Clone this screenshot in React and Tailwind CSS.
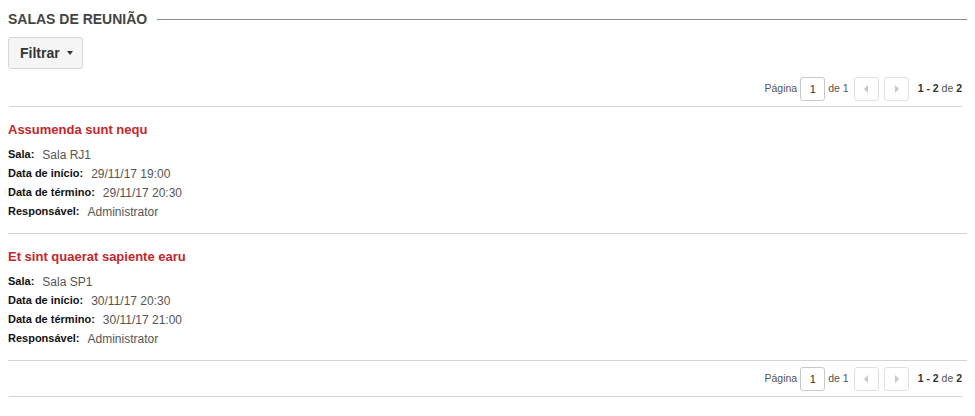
const meetings = [
  {
    id: 1,
    title: 'Assumenda sunt nequ',
    room: 'Sala RJ1',
    start: '29/11/17 19:00',
    end: '29/11/17 20:30',
    owner: 'Administrator',
  },
  {
    id: 2,
    title: 'Et sint quaerat sapiente earu',
    room: 'Sala SP1',
    start: '30/11/17 20:30',
    end: '30/11/17 21:00',
    owner: 'Administrator',
  },
];

function Caret({ dir }) {
  return (
    <svg width="5" height="8" viewBox="0 0 5 8" className="text-[#c8c8c8]">
      {dir === 'left' ? (
        <path d="M4 0 L0 4 L4 8 Z" fill="currentColor" />
      ) : (
        <path d="M1 0 L5 4 L1 8 Z" fill="currentColor" />
      )}
    </svg>
  );
}

function Pagination({ className }) {
  return (
    <div className={`ml-px mr-[5px] flex justify-end items-center border-b border-[#d4d4d4] text-[10.5px] text-[#555] ${className}`}>
      <span>Página</span>
      <div className="ml-[3px] w-[25px] h-[24px] border border-[#c8c8c8] rounded-[3px] flex items-center justify-center text-[11px] text-[#333]">
        1
      </div>
      <span className="ml-[3px]">de 1</span>
      <div className="ml-[5px] w-[25px] h-[24px] border border-[#e0e0e0] rounded-[3px] flex items-center justify-center">
        <Caret dir="left" />
      </div>
      <div className="ml-[5px] w-[25px] h-[24px] border border-[#e0e0e0] rounded-[3px] flex items-center justify-center">
        <Caret dir="right" />
      </div>
      <span className="ml-[9px] text-[#555]">
        <b className="text-[#333]">1 - 2</b> de <b className="text-[#333]">2</b>
      </span>
    </div>
  );
}

function Row({ label, value }) {
  return (
    <div className="h-[19px] flex items-center">
      <span className="text-[11px] font-bold text-[#111]">{label}</span>
      <span className="ml-[8px] text-[12px] text-[#555]">{value}</span>
    </div>
  );
}

export default function App() {
  return (
    <div className="px-2 bg-white min-h-[416px]" style={{ fontFamily: '"Liberation Sans", Arial, sans-serif' }}>
      <div className="pt-[9px] h-[29px] flex items-center">
        <h1 className="text-[14px] leading-[20px] font-bold text-[#444] uppercase whitespace-nowrap">
          Salas de Reunião
        </h1>
        <div className="ml-[10px] flex-1 h-px bg-[#8a8a8a]" />
      </div>

      <button className="mt-[8px] h-[32px] w-[75px] pl-[11px] flex items-center gap-[7px] bg-[#f5f5f5] border border-[#d6d6d6] rounded-[3px] text-[14px] font-bold text-[#333]">
        Filtrar
        <svg width="6" height="4" viewBox="0 0 6 4">
          <path d="M0 0 L6 0 L3 4 Z" fill="#333" />
        </svg>
      </button>

      <Pagination className="pt-2 pb-[5px]" />

      {meetings.map((m) => (
        <div key={m.id} className="pt-[14px] pb-[12px] border-b border-[#d4d4d4]">
          <h2 className="text-[13px] leading-[18px] font-bold text-[#c3272b] mb-[6px]">{m.title}</h2>
          <Row label="Sala:" value={m.room} />
          <Row label="Data de início:" value={m.start} />
          <Row label="Data de término:" value={m.end} />
          <Row label="Responsável:" value={m.owner} />
        </div>
      ))}

      <Pagination className="pt-[6px] pb-[5px]" />
    </div>
  );
}
